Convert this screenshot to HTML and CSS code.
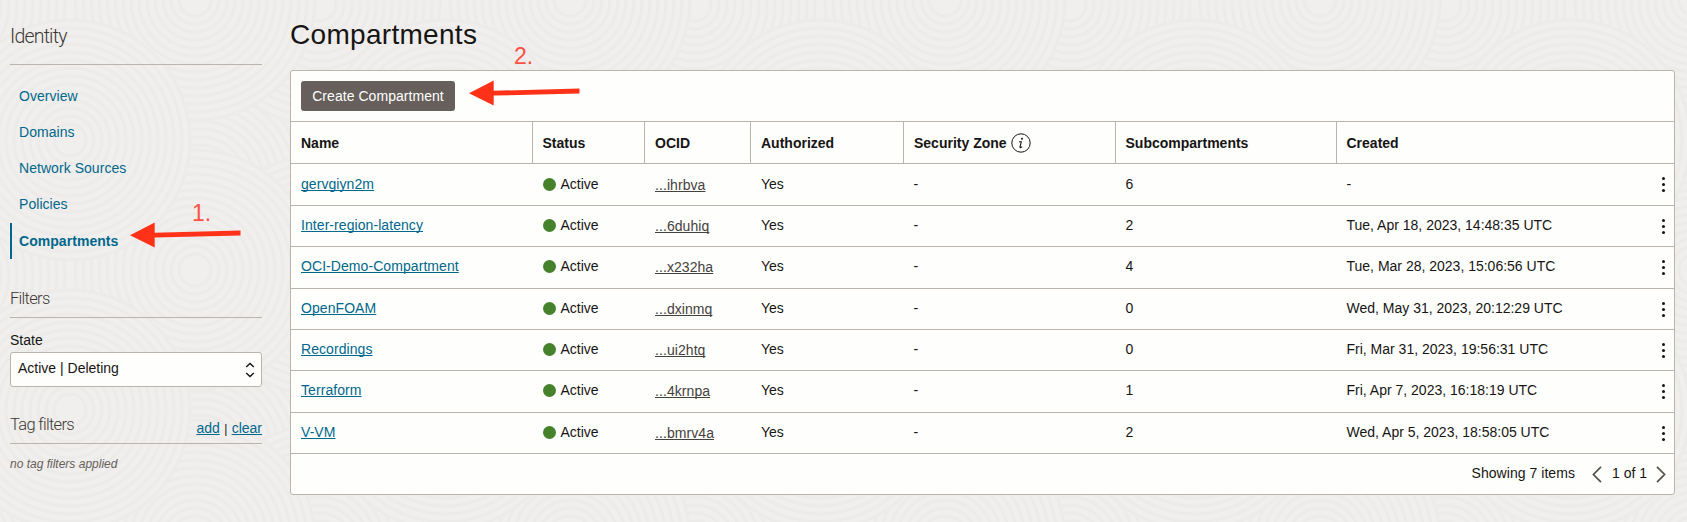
FILE: index.html
```html
<!DOCTYPE html>
<html lang="en">
<head>
<meta charset="utf-8">
<title>Compartments</title>
<link rel="stylesheet" href="styles.css">
</head>
<body>
<svg class="texture" width="1687" height="522" aria-hidden="true">
  <defs>
    <g id="rings">
      <circle r="120"/><circle r="112"/><circle r="104"/><circle r="96"/><circle r="88"/><circle r="80"/><circle r="72"/><circle r="64"/><circle r="56"/><circle r="48"/><circle r="40"/><circle r="32"/><circle r="24"/><circle r="16"/>
    </g>
    <pattern id="waves" width="375" height="270" patternUnits="userSpaceOnUse">
      <rect width="375" height="270" fill="#f1efed"/>
      <use href="#rings" x="320" y="130"/><use href="#rings" x="-55" y="130"/>
      <use href="#rings" x="200" y="185"/><use href="#rings" x="200" y="-85"/>
      <use href="#rings" x="70" y="5"/><use href="#rings" x="70" y="275"/><use href="#rings" x="445" y="5"/><use href="#rings" x="445" y="275"/>
      <use href="#rings" x="320" y="5"/><use href="#rings" x="-55" y="5"/><use href="#rings" x="320" y="275"/><use href="#rings" x="-55" y="275"/>
      <use href="#rings" x="195" y="0"/><use href="#rings" x="195" y="270"/>
      <use href="#rings" x="70" y="140"/><use href="#rings" x="445" y="140"/>
    </pattern>
  </defs>
  <rect width="1687" height="522" fill="url(#waves)"/>
</svg>
<div class="page">
  <aside class="sidebar">
    <h2 class="side-title">Identity</h2>
    <nav class="nav">
      <a class="nav-item">Overview</a>
      <a class="nav-item">Domains</a>
      <a class="nav-item">Network Sources</a>
      <a class="nav-item">Policies</a>
      <a class="nav-item active">Compartments</a>
    </nav>
    <h3 class="side-heading filters">Filters</h3>
    <div class="label">State</div>
    <div class="select"><span>Active | Deleting</span>
      <svg width="10" height="16" viewBox="0 0 10 16"><path d="M1.2 5 5 1.4 8.8 5M1.2 11 5 14.6 8.8 11" fill="none" stroke="#161513" stroke-width="1.4"/></svg>
    </div>
    <div class="tag-row"><h3 class="side-heading">Tag filters</h3><div class="tag-links"><a>add</a> <i>|</i> <a>clear</a></div></div>
    <p class="note">no tag filters applied</p>
  </aside>
  <main class="main">
    <h1 class="title">Compartments</h1>
    <section class="panel">
      <div class="toolbar"><button class="create">Create Compartment</button></div>
      <div class="row head">
        <div>Name</div><div>Status</div><div>OCID</div><div>Authorized</div>
        <div class="zone">Security Zone <svg width="20" height="20" viewBox="0 0 20 20"><circle cx="10" cy="10" r="9.2" fill="none" stroke="#161513"/><circle cx="11" cy="5.8" r="1" fill="#161513"/><path d="M8 8.8h2.3L9 13.8q-.2 1 .6.8l1.6-.8" fill="none" stroke="#161513" stroke-width="1.1"/></svg></div>
        <div>Subcompartments</div><div>Created</div>
      </div>
      <div class="row first"><div><a>gervgiyn2m</a></div><div class="status">Active</div><div class="ocid"><a>...ihrbva</a></div><div>Yes</div><div>-</div><div>6</div><div>-<b class="kebab"></b></div></div>
      <div class="row"><div><a>Inter-region-latency</a></div><div class="status">Active</div><div class="ocid"><a>...6duhiq</a></div><div>Yes</div><div>-</div><div>2</div><div>Tue, Apr 18, 2023, 14:48:35 UTC<b class="kebab"></b></div></div>
      <div class="row"><div><a>OCI-Demo-Compartment</a></div><div class="status">Active</div><div class="ocid"><a>...x232ha</a></div><div>Yes</div><div>-</div><div>4</div><div>Tue, Mar 28, 2023, 15:06:56 UTC<b class="kebab"></b></div></div>
      <div class="row"><div><a>OpenFOAM</a></div><div class="status">Active</div><div class="ocid"><a>...dxinmq</a></div><div>Yes</div><div>-</div><div>0</div><div>Wed, May 31, 2023, 20:12:29 UTC<b class="kebab"></b></div></div>
      <div class="row"><div><a>Recordings</a></div><div class="status">Active</div><div class="ocid"><a>...ui2htq</a></div><div>Yes</div><div>-</div><div>0</div><div>Fri, Mar 31, 2023, 19:56:31 UTC<b class="kebab"></b></div></div>
      <div class="row"><div><a>Terraform</a></div><div class="status">Active</div><div class="ocid"><a>...4krnpa</a></div><div>Yes</div><div>-</div><div>1</div><div>Fri, Apr 7, 2023, 16:18:19 UTC<b class="kebab"></b></div></div>
      <div class="row"><div><a>V-VM</a></div><div class="status">Active</div><div class="ocid"><a>...bmrv4a</a></div><div>Yes</div><div>-</div><div>2</div><div>Wed, Apr 5, 2023, 18:58:05 UTC<b class="kebab"></b></div></div>
      <div class="pager">
        <span class="count">Showing 7 items</span>
        <svg width="10" height="17" viewBox="0 0 10 17"><path d="M9 .8 1.4 8.5 9 16.2" fill="none" stroke="#55504c" stroke-width="1.7"/></svg>
        <span class="pages">1 of 1</span>
        <svg width="10" height="17" viewBox="0 0 10 17"><path d="M1 .8 8.6 8.5 1 16.2" fill="none" stroke="#55504c" stroke-width="1.7"/></svg>
      </div>
    </section>
  </main>
</div>
<span class="mark one">1.</span>
<svg class="arrow arrow-one" width="112" height="26" viewBox="0 0 112 26"><path d="M0 13.2 24.7.6V10.8L110.5 8.4V13.6L24.7 15.6V25.6Z" fill="#ff3119"/></svg>
<span class="mark two">2.</span>
<svg class="arrow arrow-two" width="112" height="26" viewBox="0 0 112 26"><path d="M0 13.2 24.7.6V10.8L110.5 8.4V13.6L24.7 15.6V25.6Z" fill="#ff3119"/></svg>
</body>
</html>
```
FILE: styles.css
```css
* { box-sizing: border-box; }
body {
  margin: 0;
  height: 522px;
  overflow: hidden;
  background: #f1efed;
  color: #161513;
  font: 14px/20px "Liberation Sans", Arial, sans-serif;
}
h1, h2, h3, p { margin: 0; font-weight: 400; }
.texture { position: absolute; inset: 0; z-index: -1; }
.texture circle { fill: #f1efed; stroke: #edebe9; stroke-width: 3; }
.page { display: flex; gap: 28px; padding-left: 10px; }
.sidebar { width: 252px; }
.side-title {
  height: 65px;
  padding-top: 24px;
  border-bottom: 1px solid #bab4ac;
  font: 300 19.5px/26px Roboto, sans-serif;
  letter-spacing: -0.8px;
  color: #3c3835;
}
.nav { padding-top: 13px; }
.nav-item {
  display: block;
  height: 36px;
  padding-left: 9px;
  line-height: 37px;
  letter-spacing: 0.05px;
  color: #00688c;
}
.nav-item.active { border-left: 2px solid #00688c; padding-left: 7px; margin-top: 1px; font-weight: 700; }
.side-heading { padding-top: 1px; font: 300 16.5px/22px Roboto, sans-serif; letter-spacing: -0.7px; color: #3c3835; }
.filters { height: 31px; margin-top: 28px; border-bottom: 1px solid #bab4ac; }
.label { margin-top: 12px; }
.select {
  display: flex;
  justify-content: space-between;
  height: 35px;
  margin-top: 2px;
  padding: 5px 6px 0 7px;
  border: 1px solid #bab4ac;
  border-radius: 3px;
  background: #fefefc;
}
.select svg { margin-top: 4px; }
.tag-row { display: flex; justify-content: space-between; height: 31px; margin-top: 26px; border-bottom: 1px solid #bab4ac; }
.tag-links { padding-top: 5px; }
.tag-links i { margin: 0 0.5px; font-style: normal; font-size: 12px; }
a { color: #00688c; }
.tag-links a, .row a { text-decoration: underline; text-underline-offset: 1px; text-decoration-skip-ink: none; }
.row a { letter-spacing: 0.07px; }
.note { margin-top: 10px; font-size: 12px; font-style: italic; color: #66605a; }
.main { width: 1385px; }
.title { height: 70px; padding-top: 18px; font-size: 28px; line-height: 34px; letter-spacing: 0.3px; }
.panel { height: 425px; border: 1px solid #bab4ac; border-radius: 3px; background: #fefefc; }
.toolbar { height: 51px; padding: 10px; border-bottom: 1px solid #bab4ac; }
.create { width: 154px; height: 30px; padding: 0; border: 0; border-radius: 3px; background: #665f5b; color: #fff; font: 14px/30px "Liberation Sans", Arial, sans-serif; letter-spacing: 0.05px; }
.row {
  display: grid;
  grid-template-columns: 242px 112px 106px 153px 212px 221px 1fr;
  height: 41.33px;
  border-bottom: 1px solid #bab4ac;
  line-height: 39px;
}
.row > div { position: relative; padding-left: 9.5px; white-space: nowrap; }
.row > div:first-child, .row > div:nth-child(3), .row > div:nth-child(4) { padding-left: 10px; }
.row.head, .row.first { height: 42px; }
.row.head { line-height: 42px; font-weight: 700; }
.row.first { line-height: 40px; }
.head > div { border-right: 1px solid #bab4ac; }
.head > div:last-child { border: 0; }
.row .zone { display: flex; align-items: center; gap: 4px; padding-left: 10px; line-height: 40px; }
.status::before { content: ""; display: inline-block; width: 13px; height: 13px; margin-right: 5px; border-radius: 50%; background: #46812b; vertical-align: -2px; }
.row .ocid { padding-top: 1px; }
.ocid a { color: #45413e; }
.kebab { position: absolute; right: 9px; top: 13px; width: 3px; height: 3px; border-radius: 50%; background: #161513; box-shadow: 0 6px #161513, 0 12px #161513; }
.pager { display: flex; align-items: center; justify-content: flex-end; height: 40px; padding-right: 8px; line-height: 18px; }
.count { margin-right: 17px; letter-spacing: 0.05px; }
.pages { margin: 0 9px 0 10px; }
.pager span { padding-bottom: 1px; }
.pager svg { margin-top: 2px; }
.mark { position: absolute; color: #ff5044; font-size: 23px; line-height: 26px; }
.one { left: 192px; top: 200px; }
.two { left: 514px; top: 43px; }
.arrow { position: absolute; }
.arrow-one { left: 130px; top: 222px; }
.arrow-two { left: 469px; top: 80px; }
```
